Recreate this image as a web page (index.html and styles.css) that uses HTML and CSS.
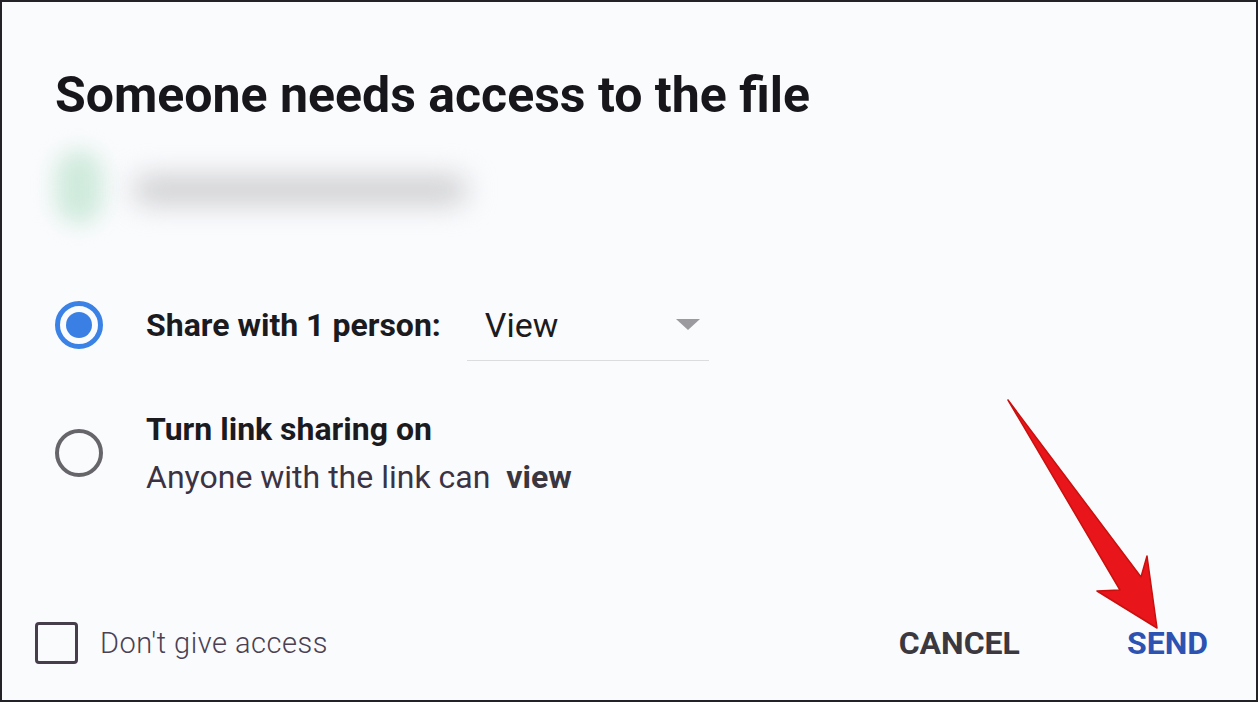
FILE: index.html
```html
<!DOCTYPE html>
<html lang="en">
<head>
    <meta charset="UTF-8">
    <title>Share request</title>
    <link rel="stylesheet" href="styles.css">
</head>
<body>
    <div class="dialog">
        <h1 class="title">Someone needs access to the file</h1>

        <div class="requester">
            <div class="avatar-blur"></div>
            <div class="name-blur"></div>
        </div>

        <div class="option option-share">
            <span class="radio radio-on"><span class="dot"></span></span>
            <span class="option-label">Share with 1 person:</span>
            <div class="select">
                <span>View</span>
                <span class="caret"></span>
            </div>
        </div>

        <div class="option option-link">
            <span class="radio"></span>
            <div class="option-text">
                <div class="option-label">Turn link sharing on</div>
                <div class="option-sub">Anyone with the link can <b>view</b></div>
            </div>
        </div>

        <div class="footer">
            <label class="deny">
                <span class="box"></span>
                <span>Don't give access</span>
            </label>
            <div class="actions">
                <button class="btn btn-cancel">CANCEL</button>
                <button class="btn btn-send">SEND</button>
            </div>
        </div>

        <svg class="arrow" width="1258" height="702" viewBox="0 0 1258 702">
            <polygon points="1008,400 1141,577 1147,556 1157,628 1097,591 1120,590" fill="#e8151b" stroke="#c9100f" stroke-width="1.5" stroke-linejoin="round"/>
        </svg>
    </div>
</body>
</html>
```

FILE: styles.css
```css
body {
    margin: 0;
    font-family: Roboto, "Liberation Sans", sans-serif;
    background: #222;
}

.dialog {
    position: relative;
    box-sizing: border-box;
    width: 1258px;
    height: 702px;
    border: 2px solid #232226;
    background: #fafbfd;
    padding: 0 0 0 53px;
    display: flex;
    flex-direction: column;
}

.title {
    margin: 62px 0 0 0;
    font-size: 50px;
    font-weight: 700;
    color: #17161b;
    line-height: 62px;
}

.requester {
    position: relative;
    height: 80px;
    width: 415px;
    margin-top: 20px;
}

.avatar-blur {
    position: absolute;
    left: 0;
    top: 4px;
    width: 48px;
    height: 74px;
    border-radius: 24px;
    background: #cfeadc;
    filter: blur(11px);
}

.name-blur {
    position: absolute;
    left: 78px;
    top: 30px;
    width: 334px;
    height: 28px;
    border-radius: 14px;
    background: #cdcdd0;
    filter: blur(14px);
}

.option {
    display: flex;
    align-items: center;
}

.option-share {
    margin-top: 63px;
}

.option-link {
    margin-top: 49px;
}

.radio {
    box-sizing: border-box;
    width: 48px;
    height: 48px;
    border-radius: 50%;
    border: 4px solid #666569;
    display: flex;
    align-items: center;
    justify-content: center;
    flex-shrink: 0;
}

.radio-on {
    border: 5px solid #3b82e6;
}

.dot {
    width: 26px;
    height: 26px;
    border-radius: 50%;
    background: #3a80e4;
}

.option-label {
    margin-left: 43px;
    font-size: 32px;
    font-weight: 700;
    color: #1b1a1f;
}

.option-text .option-label {
    margin-left: 0;
}

.option-text {
    margin-left: 43px;
}

.option-sub {
    margin-top: 10px;
    font-size: 32px;
    color: #3b3343;
}

.option-sub b {
    margin-left: 8px;
    color: #3a3640;
}

.select {
    margin-left: 26px;
    width: 242px;
    height: 66px;
    box-sizing: border-box;
    border-bottom: 1px solid #dcdce0;
    display: flex;
    align-items: center;
    justify-content: space-between;
    padding: 0 9px 6px 18px;
    margin-top: 6px;
    font-size: 34px;
    color: #1c1b20;
}

.caret {
    width: 0;
    height: 0;
    border-left: 12px solid transparent;
    border-right: 12px solid transparent;
    border-top: 11px solid #9b9a9f;
}

.footer {
    margin-top: auto;
    margin-left: -20px;
    margin-bottom: 36px;
    display: flex;
    align-items: center;
    justify-content: space-between;
    padding-right: 48px;
}

.deny {
    display: flex;
    align-items: center;
    font-size: 29px;
    font-weight: 300;
    color: #4a4152;
    letter-spacing: 0.5px;
}

.box {
    box-sizing: border-box;
    width: 43px;
    height: 42px;
    border: 3px solid #473e4c;
    border-radius: 4px;
    margin-right: 22px;
}

.actions {
    display: flex;
    gap: 107px;
}

.btn {
    background: none;
    border: none;
    padding: 0;
    font-family: Roboto, "Liberation Sans", sans-serif;
    font-size: 32px;
    font-weight: 700;
}

.btn-cancel {
    color: #3b3840;
}

.btn-send {
    color: #2d53b2;
}

.arrow {
    position: absolute;
    left: -2px;
    top: -2px;
    pointer-events: none;
}
```
